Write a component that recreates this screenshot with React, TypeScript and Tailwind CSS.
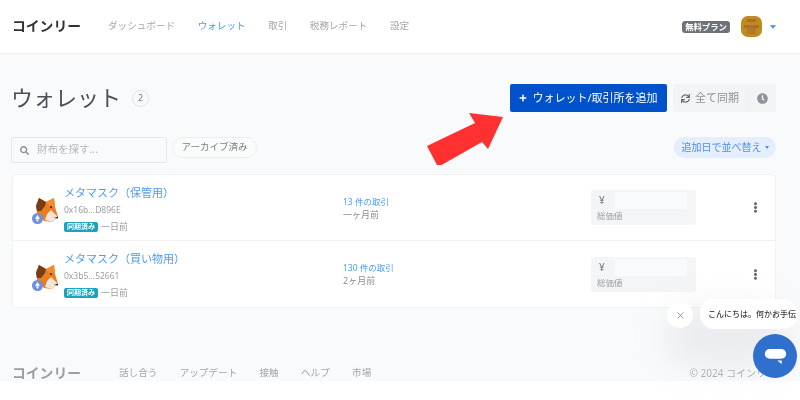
import { FaClock, FaEllipsisV, FaPlus, FaSearch, FaSync } from 'react-icons/fa';
import { X } from 'lucide-react';

const font = "font-['Noto_Sans','Noto_Sans_CJK_JP',sans-serif]";

const navItems = [
  { label: 'ダッシュボード', active: false },
  { label: 'ウォレット', active: true },
  { label: '取引', active: false },
  { label: '税務レポート', active: false },
  { label: '設定', active: false },
];

const footerLinks = ['話し合う', 'アップデート', '接触', 'ヘルプ', '市場'];

const wallets = [
  { name: 'メタマスク（保管用）', address: '0x16b...D896E', txs: '13 件の取引', last: '一ヶ月前' },
  { name: 'メタマスク（買い物用）', address: '0x3b5...52661', txs: '130 件の取引', last: '2ヶ月前' },
];

function Fox() {
  return (
    <div className="relative h-[27px] w-[24px] shrink-0">
      <svg viewBox="0 0 24 27" className="h-full w-full">
        <polygon points="2,8 5,1 12,5 20,1 21,10 24,20 18,25 10,24 3,16" fill="#ea7d1f" />
        <polygon points="2,9 5,1 12,5 11,9 7,14 3,14" fill="#763d16" />
        <polygon points="12,5 20,1 21,10 15,9" fill="#f08c2c" />
        <polygon points="13,17 17,13 24,20 18,25 11,23" fill="#f3e6d8" />
        <circle cx="17" cy="10" r="1" fill="#2b2320" />
        <polygon points="20,21 24,19.5 24,21.5" fill="#2b2320" />
      </svg>
      <div className="absolute bottom-[0px] left-[-2px] flex h-[11px] w-[11px] items-center justify-center rounded-full bg-[#6f8fe0]">
        <svg viewBox="0 0 8 12" className="h-[7px] w-[5px]">
          <polygon points="4,0 8,6 4,8 0,6" fill="#fff" />
          <polygon points="4,9 7,7.5 4,12 1,7.5" fill="#fff" />
        </svg>
      </div>
    </div>
  );
}

function WalletRow({ wallet, border }: { wallet: (typeof wallets)[number]; border: boolean }) {
  return (
    <div className={'flex h-[66px] items-center ' + (border ? 'border-b border-[#f0f1f3]' : '')}>
      <div className="ml-[21px] mt-[6px]">
        <Fox />
      </div>
      <div className="ml-[6px] w-[279px] translate-y-[1px]">
        <div className="text-[11px] leading-[16px] text-[#4d9bf5]">{wallet.name}</div>
        <div className="mt-[3px] text-[8.5px] leading-[12px] text-[#9a9fa6]">{wallet.address}</div>
        <div className="mt-[5px] flex items-center gap-[3px]">
          <span className="rounded-[2px] bg-[#1ba3bd] px-[3px] text-[7px] font-bold leading-[10px] text-white">同期済み</span>
          <span className="text-[9px] leading-[12px] text-[#9a9fa6]">一日前</span>
        </div>
      </div>
      <div className="w-[248px]">
        <div className="text-[8.5px] leading-[13px] text-[#4d9bf5]">{wallet.txs}</div>
        <div className="text-[9px] leading-[13px] text-[#8a8f96]">{wallet.last}</div>
      </div>
      <div className="h-[35px] w-[105px] rounded-[3px] bg-[#f4f5f7] px-[6px] pt-[2px]">
        <div className="flex h-[17px] items-center gap-[4px]">
          <span className="w-[8px] pl-[2px] text-[10px] text-[#6b7077]">¥</span>
          <div className="ml-[6px] h-full w-[72px] bg-[#f9fafb]" />
        </div>
        <div className="text-[8.5px] leading-[13px] text-[#9a9fa6]">総価値</div>
      </div>
      <FaEllipsisV size={11} className="ml-[54px] text-[#666b72]" />
    </div>
  );
}

export default function App() {
  return (
    <div className={font + ' relative h-[400px] w-[800px] overflow-hidden bg-white blur-[0.5px]'}>
      <header className="flex h-[54px] items-center border-b border-[#eceef0] bg-white pl-[12px]">
        <div className="w-[96px] text-[13.8px] font-bold text-[#2f3338]">コインリー</div>
        <nav className="flex items-center gap-[22.5px]">
          {navItems.map((item) => (
            <span key={item.label} className={'text-[9.6px] ' + (item.active ? 'text-[#4d9bf5]' : 'text-[#a3a7ad]')}>
              {item.label}
            </span>
          ))}
        </nav>
        <div className="ml-auto mr-[24px] flex items-center">
          <span className="rounded-[3px] bg-[#6e7379] px-[3px] text-[8.4px] font-bold leading-[12px] text-white">無料プラン</span>
          <div className="ml-[11px] h-[21px] w-[21px] overflow-hidden rounded-[7px] bg-[#c08a1e]">
            <svg viewBox="0 0 7 7" className="h-full w-full">
              <rect x="2" y="1" width="3" height="1" fill="#a8702c" />
              <rect x="1" y="3" width="5" height="1" fill="#a8702c" />
              <rect x="2" y="4" width="3" height="2" fill="#b0782a" />
            </svg>
          </div>
          <div className="ml-[8px] h-0 w-0 border-x-[3px] border-t-[4px] border-x-transparent border-t-[#4d9bf5]" />
        </div>
      </header>

      <main className="flex h-[327px] flex-col overflow-hidden bg-[#f9fafb] pl-[12px] pr-[24px]">
        <div className="mt-[30px] flex h-[28px] items-center">
          <h1 className="-ml-[1px] -translate-y-[1px] text-[22px] font-normal leading-[28px] text-[#4b5058]">ウォレット</h1>
          <span className="ml-[11px] flex h-[17px] w-[17px] items-center justify-center rounded-full border border-[#e2e4e7] text-[9px] text-[#7b8087]">2</span>
          <button className="ml-auto flex h-[28px] w-[157px] items-center justify-center gap-[5px] rounded-[2px] bg-[#0052cc] text-[11px] text-white">
            <FaPlus size={8} />
            ウォレット/取引所を追加
          </button>
          <div className="ml-[6px] flex h-[28px] w-[103px] items-center rounded-[2px] bg-[#f3f4f6] text-[#8e9399]">
            <div className="flex h-full w-[75px] items-center justify-center gap-[5px] border-r border-[#eef0f2] text-[11px]">
              <FaSync size={9} className="text-[#666b72]" />
              全て同期
            </div>
            <div className="flex flex-1 items-center justify-center">
              <FaClock size={11} className="text-[#8e9399]" />
            </div>
          </div>
        </div>

        <div className="-ml-[1px] mt-[25px] flex items-start">
          <div className="flex h-[26px] w-[156px] items-center gap-[8px] rounded-[2px] border border-[#e5e7ea] bg-[#f9fafb] pl-[8px] text-[10.5px] text-[#b4b8bd]">
            <FaSearch size={9} className="text-[#8e9399]" />
            財布を探す...
          </div>
          <div className="ml-[5px] flex h-[21px] w-[85px] items-center justify-center rounded-full border border-[#ebedef] bg-[#fafbfb] text-[9.5px] text-[#7b8087]">
            アーカイブ済み
          </div>
          <div className="ml-auto flex h-[21px] w-[102px] items-center justify-center gap-[3px] rounded-full bg-[#e4eefc] text-[10px] text-[#4d8ff0]">
            追加日で並べ替え
            <div className="h-0 w-0 border-x-[2.5px] border-t-[3px] border-x-transparent border-t-[#4d8ff0]" />
          </div>
        </div>

        <div className="mt-[11px] w-[764px] rounded-[4px] border border-[#f1f2f4] bg-white">
          {wallets.map((w, i) => (
            <WalletRow key={w.address} wallet={w} border={i === 0} />
          ))}
        </div>

        <footer className="mt-[57px] flex items-center">
          <div className="w-[107px] text-[13.8px] font-bold leading-[16px] text-[#9b9fa5]">コインリー</div>
          <div className="flex gap-[22.3px] text-[9.6px] leading-[14px] text-[#a3a7ad]">
            {footerLinks.map((l) => (
              <span key={l}>{l}</span>
            ))}
          </div>
          <span className="ml-auto whitespace-nowrap text-[10px] leading-[14px] text-[#b0b4b9]">© 2024 コインリー</span>
        </footer>
      </main>

      {/* red arrow drawn over the page */}
      <svg viewBox="0 0 90 60" className="absolute left-[420px] top-[105px] h-[60px] w-[90px]">
        <polygon points="7,41 55,18 49,8 83,12 68,44 62,37 18,62" fill="#ff3030" />
      </svg>

      {/* chat widget */}
      <div className="absolute right-[0px] top-[299px] h-[80px] w-[135px]">
        <div className="absolute left-[0px] top-[6px] h-[62px] w-[125px] rounded-full bg-[#9ca3af]/15 blur-lg" />
        <div className="absolute left-[2px] top-[3px] flex h-[26px] w-[26px] items-center justify-center rounded-full bg-white text-[#6b7077]">
          <X size={11} strokeWidth={1.5} />
        </div>
        <div className="absolute left-[35px] top-0 flex h-[30px] w-[97px] items-center overflow-hidden rounded-[14px] bg-white pl-[8px] text-[8px] font-medium whitespace-nowrap text-[#3c4046]">
          こんにちは。何かお手伝
        </div>
        <div className="absolute left-[88px] top-[35px] flex h-[44px] w-[44px] items-center justify-center rounded-full bg-[#2f6fce]">
          <svg viewBox="0 0 24 18" className="mt-[2px] h-[16px] w-[23px]">
            <rect x="0" y="0" width="24" height="11" rx="5.5" fill="#fff" />
            <polygon points="14,13 19,13 19,17" fill="#fff" />
          </svg>
        </div>
      </div>
    </div>
  );
}
